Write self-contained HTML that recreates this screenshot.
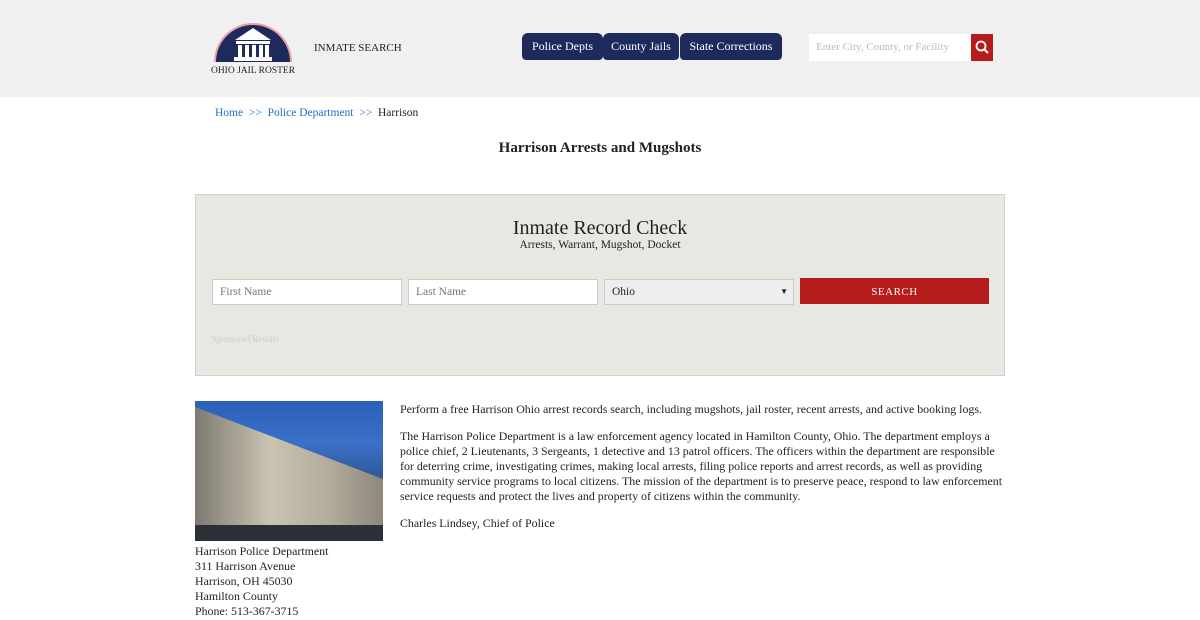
<!DOCTYPE html>
<html><head><meta charset="utf-8"><style>
body{margin:0;width:1200px;height:620px;overflow:hidden;background:#fff;font-family:"Liberation Serif",serif;color:#222}
.hdr{height:97px;background:#f0f0f0;position:relative}
.nav a{position:absolute;top:33px;height:27px;background:#1f2a5c;color:#fff;font-size:12px;line-height:27px;text-align:center;border-radius:6px 6px 4px 4px}
.crumb{position:absolute;top:107px;left:215px;font-size:11.5px}
.crumb a{color:#1a6fc9}
.box{position:absolute;left:195px;top:194px;width:810px;height:182px;background:#e8e7e1;border:1px solid #d0d0d0;box-sizing:border-box}
.f{position:absolute;top:84px;height:26px;background:#fff;border:1px solid #ccc;font-size:11.5px;color:#777;padding-left:7px;line-height:24px;box-sizing:border-box}
p{margin:0 0 12px;font-size:11.9px;line-height:15px}
</style></head><body>
<div class="hdr">
<svg style="position:absolute;left:209px;top:20px" width="88" height="56" viewBox="0 0 88 56">
<path d="M5 42 A39 39 0 0 1 83 42 Z" fill="#e8a0a8"/>
<path d="M7 42 A37 37 0 0 1 81 42 Z" fill="#1f2a5c"/>
<polygon points="44,8 26,20 62,20" fill="#fff"/>
<rect x="27" y="21" width="34" height="3" fill="#fff"/>
<rect x="29" y="25" width="4" height="12" fill="#fff"/><rect x="36" y="25" width="4" height="12" fill="#fff"/><rect x="43" y="25" width="4" height="12" fill="#fff"/><rect x="50" y="25" width="4" height="12" fill="#fff"/><rect x="56" y="25" width="4" height="12" fill="#fff"/>
<rect x="25" y="37" width="38" height="4" fill="#fff"/>
<text x="44" y="53" font-size="9.5" text-anchor="middle" fill="#222" font-family="Liberation Serif">OHIO JAIL ROSTER</text>
</svg>
<div style="position:absolute;left:314px;top:42px;font-size:11px">INMATE SEARCH</div>
<div class="nav"><a style="left:522px;width:81px">Police Depts</a><a style="left:603px;width:76px">County Jails</a><a style="left:680px;width:102px">State Corrections</a></div>
<div style="position:absolute;left:809px;top:34px;width:162px;height:27px;background:#fff;font-size:11px;color:#bbb;line-height:27px;padding-left:7px;box-sizing:border-box">Enter City, County, or Facility</div>
<div style="position:absolute;left:971px;top:34px;width:22px;height:27px;background:#b71c1c"><svg width="22" height="27"><circle cx="10" cy="12" r="4.5" stroke="#fff" stroke-width="1.8" fill="none"/><line x1="13.5" y1="15.5" x2="17" y2="19" stroke="#fff" stroke-width="2"/></svg></div>
</div>
<div class="crumb"><a>Home</a> &nbsp;<a>&gt;&gt;</a>&nbsp; <a>Police Department</a> &nbsp;<a>&gt;&gt;</a>&nbsp; Harrison</div>
<div style="position:absolute;top:140px;width:1200px;text-align:center;font-size:15px;font-weight:bold">Harrison Arrests and Mugshots</div>
<div class="box">
<div style="position:absolute;top:22px;width:100%;text-align:center;font-size:20px">Inmate Record Check</div>
<div style="position:absolute;top:44px;width:100%;text-align:center;font-size:11.5px">Arrests, Warrant, Mugshot, Docket</div>
<div class="f" style="left:16px;width:190px">First Name</div>
<div class="f" style="left:212px;width:190px">Last Name</div>
<div class="f" style="left:408px;width:190px;background:#eee;color:#222">Ohio<span style="position:absolute;right:5px;font-size:8px">&#9660;</span></div>
<div style="position:absolute;left:604px;top:83px;width:189px;height:26px;background:#b71c1c;color:#fff;font-size:11px;text-align:center;line-height:28px;letter-spacing:.5px">SEARCH</div>
<div style="position:absolute;left:16px;top:139px;font-size:9px;color:#ccc">Sponsored Results</div>
</div>
<div style="position:absolute;left:195px;top:401px;width:188px;height:140px;background:linear-gradient(180deg,#2a5fb8 0%,#3b70c8 30%,#1e2c40 100%)">
<div style="position:absolute;left:0;top:6px;width:188px;height:120px;background:linear-gradient(90deg,#7d7a72,#cbc3b2 40%,#b5ad9c 70%,#8d877c);clip-path:polygon(0 0,100% 60%,100% 100%,0 100%)"></div>
<div style="position:absolute;left:0;top:124px;width:188px;height:16px;background:#2a2f38"></div>
</div>
<div style="position:absolute;left:195px;top:544px;font-size:11.9px;line-height:15px">Harrison Police Department<br>311 Harrison Avenue<br>Harrison, OH 45030<br>Hamilton County<br>Phone: 513-367-3715</div>
<div style="position:absolute;left:400px;top:402px;width:610px">
<p>Perform a free Harrison Ohio arrest records search, including mugshots, jail roster, recent arrests, and active booking logs.</p>
<p>The Harrison Police Department is a law enforcement agency located in Hamilton County, Ohio. The department employs a police chief, 2 Lieutenants, 3 Sergeants, 1 detective and 13 patrol officers. The officers within the department are responsible for deterring crime, investigating crimes, making local arrests, filing police reports and arrest records, as well as providing community service programs to local citizens. The mission of the department is to preserve peace, respond to law enforcement service requests and protect the lives and property of citizens within the community.</p>
<p>Charles Lindsey, Chief of Police</p>
</div>
</body></html>
